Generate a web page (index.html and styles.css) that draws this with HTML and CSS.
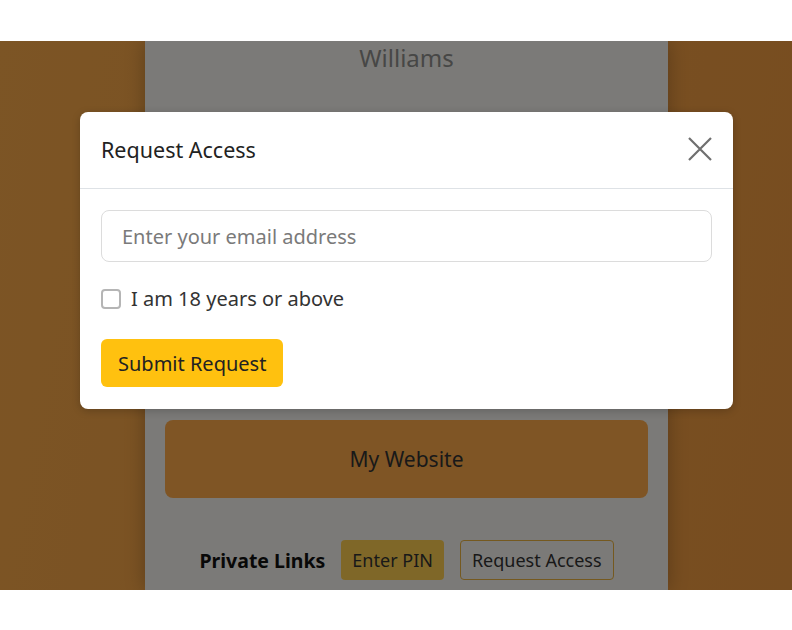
FILE: index.html
```html
<!DOCTYPE html>
<html lang="en">
<head>
    <meta charset="UTF-8">
    <meta name="viewport" content="width=device-width, initial-scale=1.0">
    <title>Williams - Links</title>
    <link rel="stylesheet" href="styles.css">
</head>
<body>
    <div class="top-band"></div>

    <main class="stage">
        <section class="profile-card">
            <h2 class="profile-name">Williams</h2>

            <a href="#" class="link-btn">My Website</a>

            <div class="private-links">
                <strong>Private Links</strong>
                <a href="#" class="pill pill-solid">Enter PIN</a>
                <a href="#" class="pill pill-outline">Request Access</a>
            </div>
        </section>

        <!-- modal backdrop -->
        <div class="backdrop">
            <div class="modal">
                <div class="modal-header">
                    <h3>Request Access</h3>
                    <button class="close-btn" aria-label="Close">
                        <svg width="24" height="24" viewBox="0 0 24 24">
                            <path d="M1 1 L23 23 M23 1 L1 23" stroke="#6f6f6f" stroke-width="2.2" fill="none"/>
                        </svg>
                    </button>
                </div>
                <div class="modal-body">
                    <input type="email" class="email-input" placeholder="Enter your email address">
                    <label class="age-check">
                        <span class="box"></span>
                        I am 18 years or above
                    </label>
                    <button class="submit-btn">Submit Request</button>
                </div>
            </div>
        </div>
    </main>

    <div class="bottom-band"></div>
</body>
</html>
```

FILE: styles.css
```css
* {
    margin: 0;
    padding: 0;
    box-sizing: border-box;
}

body {
    font-family: 'Noto Sans', 'Open Sans', sans-serif;
    background: #fff;
    color: #222;
    overflow: hidden;
}

.top-band {
    height: 41px;
    background: #fff;
}

.bottom-band {
    height: 40px;
    background: #fff;
}

.stage {
    position: relative;
    height: 549px;
    overflow: hidden;
    display: flex;
    justify-content: center;
    padding-left: 21px;
    background: linear-gradient(100deg, #f9aa4a 0%, #f3a044 60%, #ef9a40 100%);
}

.profile-card {
    width: 523px;
    background: #f7f5f0;
    box-shadow: 0 0 18px rgba(0, 0, 0, 0.25);
    display: flex;
    flex-direction: column;
    align-items: center;
    padding: 0 20px;
}

.profile-name {
    font-size: 24px;
    font-weight: 400;
    color: #8e8e8c;
    line-height: 33px;
}

.link-btn {
    display: flex;
    align-items: center;
    justify-content: center;
    width: 100%;
    height: 78px;
    margin-top: 346px;
    background: #ffab4a;
    border-radius: 8px;
    color: #333;
    font-size: 21px;
    text-decoration: none;
}

.private-links {
    display: flex;
    align-items: center;
    gap: 16px;
    margin-top: 42px;
}

.private-links strong {
    font-size: 19.5px;
    color: #111;
}

.pill {
    display: inline-flex;
    align-items: center;
    height: 40px;
    padding: 0 11px;
    border-radius: 4px;
    font-size: 18px;
    color: #333;
    text-decoration: none;
}

.pill-solid {
    background: #ffcf50;
}

.pill-outline {
    border: 1.5px solid #eab23e;
}

.backdrop {
    position: absolute;
    inset: 0;
    background: rgba(0, 0, 0, 0.5);
    display: flex;
    justify-content: center;
    align-items: flex-start;
    padding-left: 21px;
    padding-top: 71px;
}

.modal {
    width: 653px;
    background: #fff;
    border-radius: 8px;
    box-shadow: 0 2px 8px rgba(0, 0, 0, 0.2);
}

.modal-header {
    display: flex;
    align-items: center;
    justify-content: space-between;
    height: 77px;
    padding: 0 21px 2px;
    border-bottom: 1px solid #dee2e6;
}

.modal-header h3 {
    font-size: 21.5px;
    font-weight: 400;
    color: #222;
}

.close-btn {
    background: none;
    border: none;
    width: 24px;
    height: 24px;
    cursor: pointer;
}

.modal-body {
    display: flex;
    flex-direction: column;
    align-items: flex-start;
    padding: 21px 21px 22px;
}

.email-input {
    width: 100%;
    height: 52px;
    border: 1px solid #dcdcdc;
    border-radius: 8px;
    padding: 0 20px;
    font-family: inherit;
    font-size: 20px;
    color: #333;
}

.email-input::placeholder {
    color: #7a7a7a;
}

.age-check {
    display: flex;
    align-items: center;
    gap: 10px;
    margin-top: 23px;
    font-size: 20px;
    color: #333;
}

.age-check .box {
    width: 20px;
    height: 20px;
    border: 2px solid #b5b5b5;
    border-radius: 4px;
}

.submit-btn {
    margin-top: 27px;
    height: 48px;
    padding: 0 17px;
    background: #ffc10f;
    border: none;
    border-radius: 6px;
    font-family: inherit;
    font-size: 20px;
    color: #222;
    cursor: pointer;
}
```
